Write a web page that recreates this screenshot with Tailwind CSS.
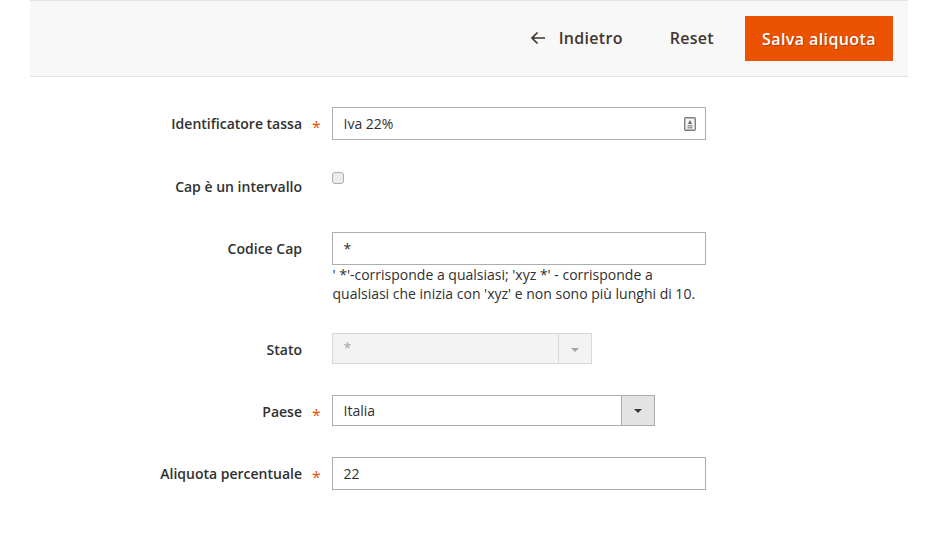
<!DOCTYPE html>
<html>
  <head>
    <meta charset="UTF-8" />
    <script src="https://cdn.jsdelivr.net/npm/@tailwindcss/browser@4"></script>
  </head>
  <body class="bg-white font-['Open_Sans',sans-serif] text-[14px] text-[#303030]">
    <div class="px-[30px]">
      <!-- Page actions -->
      <div class="flex h-[77px] items-center justify-end border-y border-[#e3e3e3] bg-[#f8f8f8] pr-[15px] text-[16px] font-semibold tracking-[0.3px] text-[#41362f]">
        <a href="#" class="mb-[2px] flex items-center">
          <svg class="mr-[13px] h-[16px] w-[16px]" viewBox="0 0 16 16" fill="none" stroke="#41362f" stroke-width="1.7">
            <path d="M15 8H2M7.500 2.500 2 8l5.500 5.500" />
          </svg>
          Indietro
        </a>
        <a href="#" class="mb-[2px] ml-[47px]">Reset</a>
        <button class="ml-[31px] h-[45px] w-[148px] bg-[#eb5202] text-center tracking-[0.4px] text-white [text-shadow:1px_1px_0_rgba(0,0,0,0.25)]">Salva aliquota</button>
      </div>

      <form class="pt-[30px]">
        <!-- Identificatore tassa -->
        <div class="flex">
          <label class="relative w-[272px] pt-[6px] text-right font-semibold">
            Identificatore tassa
            <span class="absolute left-[282px] top-[8px] text-[16px] font-normal text-[#eb5202]">*</span>
          </label>
          <div class="relative ml-[30px] flex h-[33px] w-[374px] items-center border border-[#adadad] px-[10.5px]">
            Iva 22%
            <svg class="absolute right-[9px] top-[9px] h-[14px] w-[12px]" viewBox="0 0 12 14">
              <rect x="0.700" y="0.700" width="10.600" height="12.600" rx="1" fill="#f4f4f4" stroke="#808080" stroke-width="1.400" />
              <path d="M6 3 8 7H4z" fill="#666" />
              <path d="M3.500 8h5v1.500h-5zM3.500 10h5v1.500h-5z" fill="#999" />
            </svg>
          </div>
        </div>

        <!-- Cap e un intervallo -->
        <div class="mt-[31px] flex">
          <label class="w-[272px] pt-[5px] text-right font-semibold">Cap è un intervallo</label>
          <div class="ml-[30px] mt-[1px] h-[12px] w-[12px] rounded-[3px] border border-[#adadad] bg-[#ececec]"></div>
        </div>

        <!-- Codice Cap -->
        <div class="mt-[35px] flex">
          <label class="w-[272px] pt-[6px] text-right font-semibold">Codice Cap</label>
          <div class="ml-[30px] w-[374px]">
            <div class="flex h-[33px] items-center border border-[#adadad] px-[10.5px]">*</div>
            <p class="pl-[0.5px] leading-[19px]">' *'-corrisponde a qualsiasi; 'xyz *' - corrisponde a qualsiasi che inizia con 'xyz' e non sono più lunghi di 10.</p>
          </div>
        </div>

        <!-- Stato -->
        <div class="mt-[30px] flex">
          <label class="w-[272px] pt-[6px] text-right font-semibold">Stato</label>
          <div class="ml-[30px] flex h-[31px] w-[260px] border border-[#d8d8d8] bg-[#f3f3f3] text-[#a5a5a5]">
            <span class="flex-1 px-[10.5px] pt-[3px]">*</span>
            <span class="flex w-[33px] items-center justify-center border-l border-[#d8d8d8] pt-[3px]">
              <span class="h-0 w-0 border-x-[4px] border-t-[4px] border-x-transparent border-t-[#a5a5a5]"></span>
            </span>
          </div>
        </div>

        <!-- Paese -->
        <div class="mt-[31px] flex">
          <label class="relative w-[272px] pt-[6px] text-right font-semibold">
            Paese
            <span class="absolute left-[282px] top-[8px] text-[16px] font-normal text-[#eb5202]">*</span>
          </label>
          <div class="ml-[30px] flex h-[31px] w-[323px] border border-[#adadad]">
            <span class="flex flex-1 items-center px-[10.5px]">Italia</span>
            <span class="flex w-[33px] items-center justify-center border-l border-[#adadad] bg-[#e3e3e3]">
              <span class="h-0 w-0 border-x-[4px] border-t-[4px] border-x-transparent border-t-[#41362f]"></span>
            </span>
          </div>
        </div>

        <!-- Aliquota percentuale -->
        <div class="mt-[31px] flex">
          <label class="relative w-[272px] pt-[6px] text-right font-semibold">
            Aliquota percentuale
            <span class="absolute left-[282px] top-[8px] text-[16px] font-normal text-[#eb5202]">*</span>
          </label>
          <div class="ml-[30px] flex h-[33px] w-[374px] items-center border border-[#adadad] px-[10.5px]">22</div>
        </div>
      </form>
    </div>
  </body>
</html>
